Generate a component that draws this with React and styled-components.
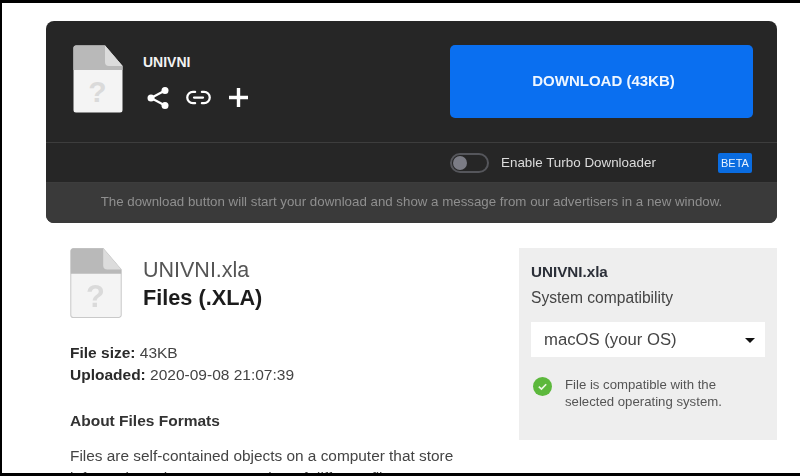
import React from 'react';
import styled, { createGlobalStyle } from 'styled-components';
import { Link2 } from 'lucide-react';

const GlobalStyle = createGlobalStyle`
  html, body {
    margin: 0;
    padding: 0;
    background: #fff;
  }
  body {
    font-family: "Liberation Sans", Arial, sans-serif;
  }
`;

const Frame = styled.div`
  width: 800px;
  height: 476px;
  box-sizing: border-box;
  border-top: 3px solid #000;
  border-left: 2px solid #000;
  border-bottom: 3px solid #000;
  overflow: hidden;
  background: #fff;
  padding: 18px 23px 0 44px;
`;

const Soft = styled.div`
  filter: blur(0.4px);
`;

const Card = styled.section`
  width: 731px;
  height: 202px;
  background: #262626;
  border-radius: 8px;
  overflow: hidden;
  display: flex;
  flex-direction: column;
`;

const CardTop = styled.div`
  height: 122px;
  flex: none;
  display: flex;
  justify-content: space-between;
  padding: 24px 24px 0 27px;
  box-sizing: border-box;
  border-bottom: 1px solid #3d3d3d;
`;

const FileInfo = styled.div`
  display: flex;
  gap: 20px;
`;

const FileName = styled.div`
  color: #f2f2f2;
  font-size: 14px;
  font-weight: 700;
  line-height: 16px;
  margin-top: 9px;
`;

const Actions = styled.div`
  display: flex;
  align-items: center;
  gap: 16px;
  margin: 14px 0 0 4px;
  color: #fff;
`;

const DownloadButton = styled.button`
  width: 303px;
  height: 73px;
  border: 0;
  border-radius: 5px;
  background: #0a6ff0;
  color: #eef6ff;
  font-family: inherit;
  font-size: 15px;
  font-weight: 700;
  padding: 0 0 2px 4px;
`;

const TurboRow = styled.div`
  height: 40px;
  flex: none;
  display: flex;
  align-items: center;
  padding-left: 404px;
  box-sizing: border-box;
  border-bottom: 1px solid #3d3d3d;
`;

const Toggle = styled.div`
  width: 39px;
  height: 20px;
  box-sizing: border-box;
  border: 2px solid #55565b;
  border-radius: 10px;
  padding: 1px;
  margin-right: 12px;
`;

const Knob = styled.div`
  width: 14px;
  height: 14px;
  border-radius: 50%;
  background: #7b7c85;
`;

const TurboLabel = styled.span`
  color: #dcdcdc;
  font-size: 13.4px;
  width: 217px;
`;

const Badge = styled.span`
  width: 34px;
  height: 20px;
  border-radius: 2px;
  background: #0a6ce0;
  color: #e8f2ff;
  font-size: 11px;
  line-height: 20px;
  text-align: center;
`;

const Notice = styled.div`
  flex: 1;
  background: #3a3a3a;
  color: #8f8f8f;
  font-size: 13.3px;
  display: flex;
  align-items: center;
  justify-content: center;
  padding-bottom: 3px;
`;

const Below = styled.div`
  display: flex;
  justify-content: space-between;
  margin-top: 25px;
`;

const Article = styled.article`
  width: 400px;
  padding-left: 24px;
  color: #2a2a2a;
`;

const Heading = styled.header`
  display: flex;
  align-items: flex-start;
  gap: 21px;
`;

const HeadingText = styled.div`
  padding-top: 9px;
`;

const Title = styled.h1`
  margin: 0;
  font-size: 21.5px;
  font-weight: 400;
  line-height: 27px;
  color: #555;
`;

const Subtitle = styled.h2`
  margin: 0;
  font-size: 21.7px;
  font-weight: 700;
  line-height: 27px;
  color: #1c1c1c;
`;

const Meta = styled.p`
  margin: 24px 0 0;
  font-size: 15.5px;
  line-height: 22px;
  color: #444;

  b {
    color: #2a2a2a;
  }
`;

const SectionTitle = styled.h3`
  margin: 24px 0 0;
  font-size: 15.5px;
  line-height: 22px;
  font-weight: 700;
  color: #333;
`;

const Body = styled.p`
  margin: 13px 0 0;
  font-size: 15.4px;
  line-height: 22px;
  color: #444;
`;

const Sidebar = styled.aside`
  width: 258px;
  height: 192px;
  box-sizing: border-box;
  background: #eee;
  padding: 15px 12px 0;
`;

const SideTitle = styled.div`
  font-size: 15.2px;
  font-weight: 700;
  line-height: 18px;
  color: #2b2f38;
`;

const SideLabel = styled.div`
  font-size: 15.6px;
  line-height: 20px;
  margin-top: 7px;
  color: #444;
`;

const Select = styled.div`
  height: 35px;
  background: #fff;
  margin-top: 14px;
  padding: 1px 10px 0 13px;
  box-sizing: border-box;
  display: flex;
  align-items: center;
  justify-content: space-between;
  font-size: 16.7px;
  color: #444;
`;

const Caret = styled.span`
  width: 0;
  height: 0;
  border-left: 5px solid transparent;
  border-right: 5px solid transparent;
  border-top: 5px solid #111;
`;

const Compat = styled.div`
  display: flex;
  align-items: flex-start;
  gap: 13px;
  margin: 19px 0 0 2px;
`;

const CompatText = styled.div`
  font-size: 13.2px;
  line-height: 17px;
  color: #555;
`;

const PlusSvg = styled.svg`
  margin-left: 1px;
`;

const FileIcon = ({ width, height, outlined }) => (
  <svg width={width} height={height} viewBox="0 0 50 68" style={{ flex: 'none', display: 'block' }}>
    <path d="M3 .5h29L49.5 21V65a2.5 2.5 0 0 1-2.5 2.5H3A2.5 2.5 0 0 1 .5 65V3A2.5 2.5 0 0 1 3 .5z" fill="#f4f4f4" stroke={outlined ? '#c9c9c9' : 'none'} />
    <path d="M3 .5h29L49.5 21v4H.5V3A2.5 2.5 0 0 1 3 .5z" fill="#b9b9b9" />
    <path d="M32 .5 49.5 21H36a4 4 0 0 1-4-4z" fill="#dcdcdc" />
    <text x="24.5" y="57" fontFamily="'Liberation Sans', sans-serif" fontSize="30" fontWeight="700" textAnchor="middle" fill="#dadada">?</text>
  </svg>
);

const ShareIcon = () => (
  <svg width="22" height="24" viewBox="0 0 22 24" fill="#fff">
    <circle cx="18" cy="4.5" r="3.5" />
    <circle cx="18" cy="19.5" r="3.5" />
    <circle cx="4" cy="12" r="3.5" />
    <path d="M18 4.5 4 12l14 7.5" fill="none" stroke="#fff" strokeWidth="2.2" />
  </svg>
);

const PlusIcon = () => (
  <PlusSvg width="19" height="19" viewBox="0 0 19 19">
    <path d="M9.5 0v19M0 9.5h19" stroke="#fff" strokeWidth="3.4" />
  </PlusSvg>
);

const CheckBadge = () => (
  <svg width="19" height="19" viewBox="0 0 18 18" style={{ flex: 'none', marginTop: 1 }}>
    <circle cx="9" cy="9" r="9" fill="#5cb83c" />
    <path d="M5.5 9.2 8 11.5l4.5-4.6" fill="none" stroke="#eaf7e4" strokeWidth="1.6" />
  </svg>
);

const App = () => (
  <>
    <GlobalStyle />
    <Frame>
      <Soft>
        <Card>
          <CardTop>
            <FileInfo>
              <FileIcon width={50} height={68} />
              <div>
                <FileName>UNIVNI</FileName>
                <Actions>
                  <ShareIcon />
                  <Link2 size={27} strokeWidth={2} color="#fff" />
                  <PlusIcon />
                </Actions>
              </div>
            </FileInfo>
            <DownloadButton>DOWNLOAD (43KB)</DownloadButton>
          </CardTop>
          <TurboRow>
            <Toggle><Knob /></Toggle>
            <TurboLabel>Enable Turbo Downloader</TurboLabel>
            <Badge>BETA</Badge>
          </TurboRow>
          <Notice>The download button will start your download and show a message from our advertisers in a new window.</Notice>
        </Card>
        <Below>
          <Article>
            <Heading>
              <FileIcon width={52} height={70} outlined />
              <HeadingText>
                <Title>UNIVNI.xla</Title>
                <Subtitle>Files (.XLA)</Subtitle>
              </HeadingText>
            </Heading>
            <Meta>
              <b>File size:</b> 43KB<br />
              <b>Uploaded:</b> 2020-09-08 21:07:39
            </Meta>
            <SectionTitle>About Files Formats</SectionTitle>
            <Body>
              Files are self-contained objects on a computer that store information. There are a number of different file types
            </Body>
          </Article>
          <Sidebar>
            <SideTitle>UNIVNI.xla</SideTitle>
            <SideLabel>System compatibility</SideLabel>
            <Select>
              macOS (your OS)
              <Caret />
            </Select>
            <Compat>
              <CheckBadge />
              <CompatText>
                File is compatible with the<br />
                selected operating system.
              </CompatText>
            </Compat>
          </Sidebar>
        </Below>
      </Soft>
    </Frame>
  </>
);

export default App;
